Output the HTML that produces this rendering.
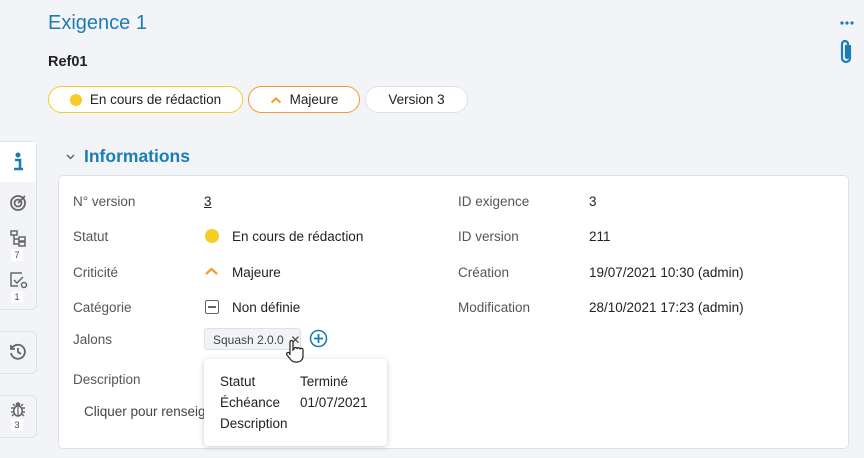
<!DOCTYPE html>
<html><head><meta charset="utf-8"><style>
*{box-sizing:border-box;margin:0;padding:0}
body{width:864px;height:458px;background:#f2f4f8;font-family:"Liberation Sans",sans-serif;color:#222;position:relative;overflow:hidden;font-size:13.5px}
.a{position:absolute;white-space:nowrap}
.lbl{color:#555}
.pill{position:absolute;top:86px;height:27px;border-radius:14px;background:#fff;display:flex;align-items:center;justify-content:center;font-size:13.5px}
.side{position:absolute;left:-2px;width:39px;background:#f2f4f8;border:1px solid #dde2ea;border-radius:0 6px 6px 0}
.num{position:absolute;left:11px;width:12px;height:12px;background:#fff;font-size:9px;text-align:center;line-height:12px;color:#444}
</style></head><body>
<div class="a" style="left:48px;top:12px;font-size:20px;color:#1a7db5">Exigence 1</div>
<div class="a" style="left:48px;top:54px;font-size:14.5px;font-weight:bold">Ref01</div>
<svg class="a" style="left:840px;top:20px" width="14" height="6"><circle cx="2" cy="3" r="1.6" fill="#1a7db5"/><circle cx="7" cy="3" r="1.6" fill="#1a7db5"/><circle cx="12" cy="3" r="1.6" fill="#1a7db5"/></svg>
<svg class="a" style="left:839px;top:38px" width="16" height="28" viewBox="0 0 16 28"><path d="M11 8v12a4 4 0 0 1-8 0V6a3 3 0 0 1 6 0v13a1 1 0 0 1-2 0V8" fill="none" stroke="#1a7db5" stroke-width="2.2" stroke-linecap="round"/></svg>
<div class="pill" style="left:48px;width:195px;border:1px solid #f0cf2a"><span style="width:12px;height:12px;border-radius:50%;background:#f4cd27;margin-right:8px"></span>En cours de rédaction</div>
<div class="pill" style="left:248px;width:112px;border:1px solid #f59a2d"><svg width="12" height="8" style="margin-right:8px"><path d="M1.5 6.5l4.5-4 4.5 4" fill="none" stroke="#f59a2d" stroke-width="2"/></svg>Majeure</div>
<div class="pill" style="left:365px;width:103px;border:1px solid #dde2ea">Version 3</div>

<div class="side" style="top:141px;height:169px"></div>
<div class="a" style="left:0;top:142px;width:36px;height:40px;background:#fff"></div>
<svg class="a" style="left:12px;top:152px" width="12" height="20"><circle cx="6" cy="3" r="2.5" fill="#1a7db5"/><path d="M3 8h5v9h2M2 17h9" fill="none" stroke="#1a7db5" stroke-width="2.6"/></svg>
<svg class="a" style="left:9px;top:194px" width="18" height="18" viewBox="0 0 18 18" fill="none" stroke="#666" stroke-width="1.8"><circle cx="9" cy="9" r="7"/><circle cx="9" cy="9" r="3.5"/><path d="M9 9l7-7"/></svg>
<svg class="a" style="left:10px;top:230px" width="17" height="17" viewBox="0 0 17 17" fill="none" stroke="#666" stroke-width="1.5"><rect x="1" y="1" width="6" height="4"/><rect x="9" y="7" width="6" height="4"/><rect x="9" y="12" width="6" height="4"/><path d="M4 5v9h5M4 9h5"/></svg>
<div class="num" style="top:249px">7</div>
<svg class="a" style="left:10px;top:272px" width="18" height="17" viewBox="0 0 18 17" fill="none" stroke="#666" stroke-width="1.5"><path d="M12 1H1v13h7"/><path d="M4 8l3 3 6-6"/><circle cx="14" cy="13" r="2.5"/></svg>
<div class="num" style="top:291px">1</div>
<div class="side" style="top:331px;height:43px"></div>
<svg class="a" style="left:9px;top:343px" width="18" height="18" viewBox="0 0 18 18" fill="none" stroke="#666" stroke-width="1.8"><path d="M3 5a7 7 0 1 1-1 5"/><path d="M2 2v4h4"/><path d="M9 5v4l3 2"/></svg>
<div class="side" style="top:395px;height:43px"></div>
<svg class="a" style="left:10px;top:401px" width="16" height="16" viewBox="0 0 16 16"><path d="M1 7h3M12 7h3M1 11h3M12 11h3M2 15l2-2M14 15l-2-2M3 3l2 2M13 3l-2 2" stroke="#666" stroke-width="1.4"/><circle cx="8" cy="3.5" r="2.3" fill="#666"/><ellipse cx="8" cy="10" rx="4.2" ry="5" fill="#fff" stroke="#666" stroke-width="1.6"/><path d="M8 6v9" stroke="#666" stroke-width="1.3"/></svg>
<div class="num" style="top:419px">3</div>

<svg class="a" style="left:66px;top:154px" width="9" height="6"><path d="M1 1l3.5 3.5L8 1" fill="none" stroke="#555" stroke-width="1.3"/></svg>
<div class="a" style="left:84px;top:146px;font-size:17.5px;color:#1a7db5;font-weight:bold">Informations</div>
<div class="a" style="left:58px;top:175px;width:791px;height:274px;background:#fff;border:1px solid #dde2ea;border-radius:5px"></div>

<div class="a lbl" style="left:73px;top:194px">N° version</div>
<div class="a" style="left:204px;top:194px;text-decoration:underline">3</div>
<div class="a lbl" style="left:73px;top:229px">Statut</div>
<div class="a" style="left:205px;top:229px;width:14px;height:14px;border-radius:50%;background:#f4cd27"></div>
<div class="a" style="left:232px;top:229px">En cours de rédaction</div>
<div class="a lbl" style="left:73px;top:265px">Criticité</div>
<svg class="a" style="left:204px;top:266px" width="15" height="10"><path d="M2 8l5.5-5 5.5 5" fill="none" stroke="#f59a2d" stroke-width="2.2"/></svg>
<div class="a" style="left:232px;top:265px">Majeure</div>
<div class="a lbl" style="left:73px;top:300px">Catégorie</div>
<div class="a" style="left:205px;top:300px;width:14px;height:14px;border:1.6px solid #666;border-radius:2px"></div>
<div class="a" style="left:208px;top:306px;width:8px;height:1.6px;background:#666"></div>
<div class="a" style="left:232px;top:300px">Non définie</div>
<div class="a lbl" style="left:73px;top:332px">Jalons</div>
<div class="a" style="left:204px;top:328px;width:97px;height:22px;background:#f1f3f6;border:1px solid #dde2ea;border-radius:3px;font-size:12px;color:#444;padding:4px 0 0 8px">Squash 2.0.0 &nbsp;✕</div>
<svg class="a" style="left:309px;top:329px" width="19" height="19"><circle cx="9.5" cy="9.5" r="8" fill="none" stroke="#1a7db5" stroke-width="1.6"/><path d="M9.5 5v9M5 9.5h9" stroke="#1a7db5" stroke-width="1.8"/></svg>
<div class="a lbl" style="left:73px;top:372px">Description</div>
<div class="a" style="left:84px;top:404px;color:#444">Cliquer pour renseigner</div>

<div class="a lbl" style="left:458px;top:194px">ID exigence</div>
<div class="a" style="left:589px;top:194px">3</div>
<div class="a lbl" style="left:458px;top:229px">ID version</div>
<div class="a" style="left:589px;top:229px">211</div>
<div class="a lbl" style="left:458px;top:265px">Création</div>
<div class="a" style="left:589px;top:265px">19/07/2021 10:30 (admin)</div>
<div class="a lbl" style="left:458px;top:300px">Modification</div>
<div class="a" style="left:589px;top:300px">28/10/2021 17:23 (admin)</div>

<div class="a" style="left:204px;top:359px;width:183px;height:87px;background:#fff;border-radius:4px;box-shadow:0 1px 6px rgba(0,0,0,.2)"></div>
<div class="a" style="left:220px;top:374px">Statut</div><div class="a" style="left:300px;top:374px">Terminé</div>
<div class="a" style="left:220px;top:395px">Échéance</div><div class="a" style="left:300px;top:395px">01/07/2021</div>
<div class="a" style="left:220px;top:416px">Description</div>
<svg class="a" style="left:285px;top:340px" width="20" height="24" viewBox="0 0 20 24"><path d="M5 2a1.5 1.5 0 0 1 3 0v8l1-1a1.5 1.5 0 0 1 3 0 1.5 1.5 0 0 1 3 .5 1.5 1.5 0 0 1 3 .5v6c0 3-2 6-6 6h-2c-2 0-3-1-4-2l-4-5a1.5 1.5 0 0 1 2.5-2L5 15z" fill="#fff" stroke="#222" stroke-width="1.2"/></svg>
</body></html>
